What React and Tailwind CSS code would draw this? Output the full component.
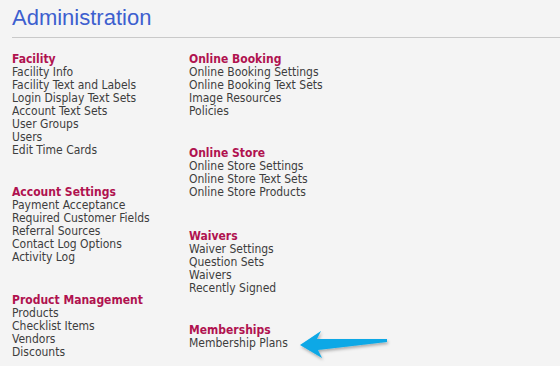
const left = [
  {
    title: "Facility",
    mt: "mt-0",
    items: [
      "Facility Info",
      "Facility Text and Labels",
      "Login Display Text Sets",
      "Account Text Sets",
      "User Groups",
      "Users",
      "Edit Time Cards",
    ],
  },
  {
    title: "Account Settings",
    mt: "mt-[29px]",
    items: [
      "Payment Acceptance",
      "Required Customer Fields",
      "Referral Sources",
      "Contact Log Options",
      "Activity Log",
    ],
  },
  {
    title: "Product Management",
    mt: "mt-[30px]",
    items: ["Products", "Checklist Items", "Vendors", "Discounts"],
  },
];

const right = [
  {
    title: "Online Booking",
    mt: "mt-0",
    items: [
      "Online Booking Settings",
      "Online Booking Text Sets",
      "Image Resources",
      "Policies",
    ],
  },
  {
    title: "Online Store",
    mt: "mt-[29px]",
    items: [
      "Online Store Settings",
      "Online Store Text Sets",
      "Online Store Products",
    ],
  },
  {
    title: "Waivers",
    mt: "mt-[31px]",
    items: ["Waiver Settings", "Question Sets", "Waivers", "Recently Signed"],
  },
  {
    title: "Memberships",
    mt: "mt-[29px]",
    items: ["Membership Plans"],
  },
];

function Group({ group }) {
  return (
    <div className={group.mt}>
      <div className="font-bold text-[#b0124f]">{group.title}</div>
      {group.items.map((item) => (
        <div key={item} className="text-[#3d3d3d]">
          {item}
        </div>
      ))}
    </div>
  );
}

export default function App() {
  return (
    <div className="relative w-[560px] h-[366px] overflow-hidden bg-[#f4f4f4]">
      <div className="pl-3 pt-[5px]">
        <h1 className="text-[22px] leading-[25px] text-[#3d5fcf] font-['Liberation_Sans',Arial,sans-serif]">
          Administration
        </h1>
      </div>
      <div className="ml-3 mt-[7px] border-t border-[#c9c9c9]"></div>

      <div className="flex pl-3 pt-[15px] text-[12px] leading-[13px] font-['DejaVu_Sans_Condensed','DejaVu_Sans',sans-serif]">
        <div className="w-[177px]">
          {left.map((g) => (
            <Group key={g.title} group={g} />
          ))}
        </div>
        <div>
          {right.map((g) => (
            <Group key={g.title} group={g} />
          ))}
        </div>
      </div>

      {/* pointer arrow */}
      <svg
        className="absolute left-[296px] top-[326px]"
        width="96"
        height="38"
        viewBox="296 326 96 38"
      >
        <defs>
          <filter id="sh" x="-20%" y="-40%" width="140%" height="180%">
            <feDropShadow dx="1" dy="2" stdDeviation="1.5" floodColor="#000" floodOpacity="0.3" />
          </filter>
        </defs>
        <polygon
          points="300,345 321,331 317,339 387,339 387,342 318,350 322,358"
          fill="#0aa8e6"
          filter="url(#sh)"
        />
      </svg>
    </div>
  );
}
